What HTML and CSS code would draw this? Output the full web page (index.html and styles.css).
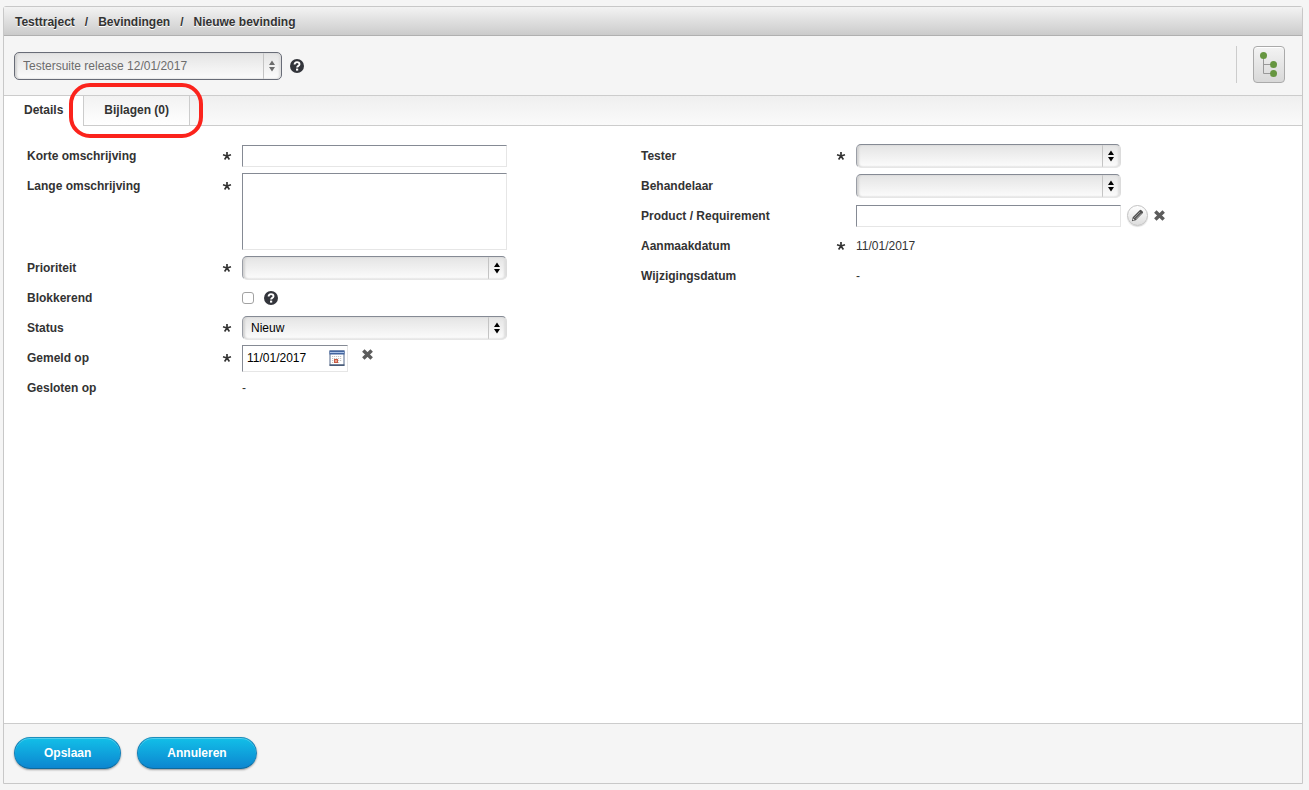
FILE: index.html
```html
<!DOCTYPE html>
<html lang="nl">
<head>
<meta charset="utf-8">
<title>Nieuwe bevinding</title>
<link rel="stylesheet" href="styles.css">
</head>
<body>
<svg class="defs" aria-hidden="true">
  <symbol id="star" viewBox="0 0 10 10"><path d="M5 5V1M5 5L1 3.8M5 5L9 3.8M5 5L2.6 8.4M5 5L7.4 8.4" stroke="#333" stroke-width="1.7" fill="none"/></symbol>
  <symbol id="arrows" viewBox="0 0 8 12"><path d="M4 0.5L7 5H1zM4 11.5L1 7H7z" fill="currentColor"/></symbol>
  <symbol id="help" viewBox="0 0 14 14"><circle cx="7" cy="7" r="7" fill="#33353b"/><path d="M4.6 5.6C4.6 2.4 9.5 2.4 9.5 5.2C9.5 6.9 7.1 6.8 7.1 8.6" stroke="#fff" stroke-width="1.9" fill="none"/><rect x="6" y="9.6" width="2.2" height="2" fill="#fff"/></symbol>
  <symbol id="cross" viewBox="0 0 10 10"><path d="M1.2 1.4L8.800 8.600M8.800 1.4L1.2 8.600" stroke="#5c5c5c" stroke-width="3.2" fill="none"/></symbol>
</svg>

<main class="frame">
  <nav class="crumbs" aria-label="Kruimelpad">
    <a href="#">Testtraject</a><span>/</span><a href="#">Bevindingen</a><span>/</span><a href="#">Nieuwe bevinding</a>
  </nav>

  <div class="toolbar">
    <span class="select select-large">
      <select aria-label="Release" disabled><option>Testersuite release 12/01/2017</option></select>
      <svg><use href="#arrows"/></svg>
    </span>
    <button class="plain" aria-label="Help"><svg class="help"><use href="#help"/></svg></button>
    <div class="tools">
      <button class="tree" aria-label="Boomstructuur">
        <svg viewBox="0 0 20 28">
          <path d="M4.500 5V22.500H14M4.500 13.500H14" stroke="#999" fill="none"/>
          <circle cx="4.500" cy="4.500" r="3.500" fill="#669640"/>
          <circle cx="14.500" cy="13.500" r="3.500" fill="#669640"/>
          <circle cx="14.500" cy="22.500" r="3.500" fill="#669640"/>
        </svg>
      </button>
    </div>
  </div>

  <div class="tabs">
    <button class="tab active">Details</button>
    <button class="tab">Bijlagen (0)<span class="ring"></span></button>
  </div>

  <form class="content">
    <div class="column">
      <div class="row">
        <label for="short">Korte omschrijving</label><svg class="star"><use href="#star"/></svg>
        <div class="field"><input class="text" id="short" type="text"></div>
      </div>
      <div class="row">
        <label for="long">Lange omschrijving</label><svg class="star"><use href="#star"/></svg>
        <div class="field"><textarea class="text area" id="long"></textarea></div>
      </div>
      <div class="row">
        <label for="priority">Prioriteit</label><svg class="star"><use href="#star"/></svg>
        <div class="field"><span class="select"><select id="priority"><option></option></select><svg><use href="#arrows"/></svg></span></div>
      </div>
      <div class="row">
        <label for="blocking">Blokkerend</label>
        <div class="field"><input class="check" id="blocking" type="checkbox"><button type="button" class="plain" aria-label="Help"><svg class="help"><use href="#help"/></svg></button></div>
      </div>
      <div class="row">
        <label for="status">Status</label><svg class="star"><use href="#star"/></svg>
        <div class="field"><span class="select"><select id="status"><option>Nieuw</option></select><svg><use href="#arrows"/></svg></span></div>
      </div>
      <div class="row">
        <label for="reported">Gemeld op</label><svg class="star"><use href="#star"/></svg>
        <div class="field">
          <span class="date">
            <input id="reported" type="text" value="11/01/2017">
            <button type="button" class="plain" aria-label="Kalender">
              <svg class="calendar" viewBox="0 0 16 16">
                <rect x="1" y="1" width="14" height="14" fill="#fff" stroke="#566b8c"/>
                <path d="M0.500 0.500H15.500V4.500H0.500z" fill="#42649f"/><path d="M1 2.500H15" stroke="#a9c1e6"/>
                <path d="M0.500 15.200H15.500" stroke="#3f5270" stroke-width="1.400"/>
                <path d="M3 6.500H13M3 8.500H13M3 10.500H13M3 12.500H11" stroke="#c2c2c2" stroke-width="1.200" stroke-dasharray="1.200 .8"/>
                <rect x="5.500" y="9.500" width="3" height="3" fill="#e9a08c" stroke="#c65b43"/>
              </svg>
            </button>
          </span>
          <button type="button" class="plain clear-date" aria-label="Wissen"><svg class="cross"><use href="#cross"/></svg></button>
        </div>
      </div>
      <div class="row">
        <span class="label">Gesloten op</span>
        <div class="field">-</div>
      </div>
    </div>

    <div class="column">
      <div class="row">
        <label for="tester">Tester</label><svg class="star"><use href="#star"/></svg>
        <div class="field"><span class="select"><select id="tester"><option></option></select><svg><use href="#arrows"/></svg></span></div>
      </div>
      <div class="row">
        <label for="handler">Behandelaar</label>
        <div class="field"><span class="select"><select id="handler"><option></option></select><svg><use href="#arrows"/></svg></span></div>
      </div>
      <div class="row">
        <label for="product">Product / Requirement</label>
        <div class="field">
          <input class="text" id="product" type="text">
          <button type="button" class="edit" aria-label="Bewerken">
            <svg viewBox="0 0 12 12"><path d="M0.800 11.200L1.600 7.600L8 1.200Q8.800 0.400 9.600 1.200L10.800 2.400Q11.600 3.200 10.800 4L4.400 10.400z" fill="#505050"/><path d="M3 8.200L8.400 2.800M4.400 9.200L9.600 4" stroke="#ccc" stroke-width=".6"/><path d="M1.800 9.200L2.900 10.200" stroke="#eee" stroke-width="1"/></svg>
          </button>
          <button type="button" class="plain" aria-label="Wissen"><svg class="cross"><use href="#cross"/></svg></button>
        </div>
      </div>
      <div class="row">
        <span class="label">Aanmaakdatum</span><svg class="star"><use href="#star"/></svg>
        <div class="field">11/01/2017</div>
      </div>
      <div class="row">
        <span class="label">Wijzigingsdatum</span>
        <div class="field">-</div>
      </div>
    </div>
  </form>

  <footer class="actions">
    <button class="action">Opslaan</button>
    <button class="action">Annuleren</button>
  </footer>
</main>
</body>
</html>
```
FILE: styles.css
```css
* { box-sizing: border-box; }

body {
  margin: 0;
  padding: 6px 6px 6px 3px;
  min-height: 100vh;
  display: flex;
  background: #f5f5f5;
  color: #333;
  font: 12px/16px "Liberation Sans", Arial, sans-serif;
}

button, input, select, textarea { margin: 0; font: inherit; }
button { cursor: pointer; }
svg { display: block; }
.defs { position: absolute; width: 0; height: 0; }

.frame {
  flex: 1;
  display: flex;
  flex-direction: column;
  border: 1px solid #c8c8c8;
  border-radius: 3px 3px 0 0;
}

.crumbs {
  display: flex;
  gap: 10px;
  padding: 7px 11px 5px;
  border-bottom: 1px solid #b0b0b0;
  background: linear-gradient(#f3f3f3, #cbcbcb);
  font-weight: bold;
  text-shadow: 0 1px 0 #fff;
}
.crumbs a { color: #333; text-decoration: none; }

.toolbar {
  display: flex;
  align-items: center;
  gap: 8px;
  height: 59px;
  padding: 0 17px 0 10px;
}
.tools {
  display: flex;
  align-items: center;
  height: 37px;
  margin: 0 0 2px auto;
  padding-left: 16px;
  border-left: 1px solid #ccc;
}
.tree {
  width: 32px;
  height: 37px;
  padding: 4px 5px;
  border: 1px solid #aaa;
  border-radius: 4px;
  background: linear-gradient(#f3f3f3, #d8d8d8);
  box-shadow: inset 0 1px 0 #fff;
}
.tree svg { width: 20px; height: 28px; }

.plain { padding: 0; border: 0; background: none; }
.help { width: 14px; height: 14px; }
.cross { width: 11px; height: 11px; }

.tabs {
  display: flex;
  height: 31px;
  border-top: 1px solid #ccc;
  border-bottom: 1px solid #ccc;
  background: linear-gradient(#efefef, #fafafa);
}
.tab {
  position: relative;
  padding: 0 20px 2px;
  border: 0;
  border-right: 1px solid #ccc;
  background: linear-gradient(#f2f2f2, #fff);
  color: #333;
  font-weight: bold;
}
.tab.active { margin-bottom: -1px; background: #fff; }
.ring {
  position: absolute;
  inset: -13px -14px -13px -15px;
  border: 4px solid #fb231c;
  border-radius: 21px;
  pointer-events: none;
  z-index: 1;
}

.content {
  flex: 1;
  display: grid;
  grid-template-columns: 1fr 1fr;
  align-items: start;
  padding: 15px 47px 15px 23px;
  background: #fff;
}
.row {
  display: grid;
  grid-template-columns: 195px 20px 1fr;
  align-items: start;
  min-height: 30px;
}
label, .label { padding: 7px 0; font-weight: bold; }
.star { width: 10px; height: 10px; margin-top: 10px; }
.field {
  grid-column: 3;
  display: flex;
  align-items: center;
  min-height: 30px;
}

.text, .date {
  width: 265px;
  height: 22px;
  padding: 2px 4px;
  border: 1px solid;
  border-color: #858a94 #e6e6e6 #e6e6e6 #858a94;
  border-radius: 0;
  background: #fff;
  color: #000;
}
.area { height: 77px; margin: 2px 0 3px; resize: none; }

.select { position: relative; width: 265px; height: 24px; color: #000; }
.select select {
  width: 100%;
  height: 100%;
  padding: 0 24px 0 8px;
  appearance: none;
  border: 1px solid;
  border-color: #858a94 #dcdcdc #e6e6e6 #9a9ea6;
  border-radius: 5px;
  background: linear-gradient(#c4c4c4, #c4c4c4) right 17px top / 1px 100% no-repeat, linear-gradient(#e4e4e4, #fcfcfc);
  box-shadow: inset 2px 0 2px #d2d2d2, inset -2px 0 2px #dedede;
  color: inherit;
  opacity: 1;
}
.select svg {
  position: absolute;
  top: 50%;
  right: 6px;
  width: 8px;
  height: 12px;
  margin-top: -6px;
  pointer-events: none;
}
.select-large { width: 268px; height: 28px; color: #6c6c6c; }
.select-large select { border-color: #686c77; }

.check {
  width: 12px;
  height: 12px;
  margin-right: 10px;
  appearance: none;
  border: 1px solid #a2a2a2;
  border-radius: 3px;
  background: #fff;
}
.check:checked { background: #1692d0; }

.date {
  display: flex;
  align-items: center;
  justify-content: space-between;
  width: 106px;
  height: 27px;
  padding: 0 2px 0 4px;
}
.date input { width: 72px; padding: 0; border: 0; color: #000; }
.calendar { width: 16px; height: 16px; }
.clear-date { margin: 0 0 8px 14px; }

.edit {
  width: 21px;
  height: 21px;
  margin: 0 6px 2px;
  padding: 0 3px;
  border: 1px solid #c2c2c2;
  border-radius: 50%;
  background: linear-gradient(#fff, #ddd);
  box-shadow: 0 1px 1px #ddd;
}
.edit svg { width: 13px; height: 13px; }
.edit + .plain { margin-bottom: 2px; }

.actions {
  display: flex;
  gap: 16px;
  padding: 13px 10px 14px;
  border-top: 1px solid #ccc;
}
.action {
  height: 32px;
  padding: 0 29px;
  border: 1px solid;
  border-color: #1b8fbd #1580b8 #0f6a9c;
  border-radius: 16px;
  background: linear-gradient(#12bfe8, #0c86d0);
  box-shadow: inset 0 1px 0 #52cdec, 0 1px 2px #999;
  color: #fff;
  font-weight: bold;
}
```
